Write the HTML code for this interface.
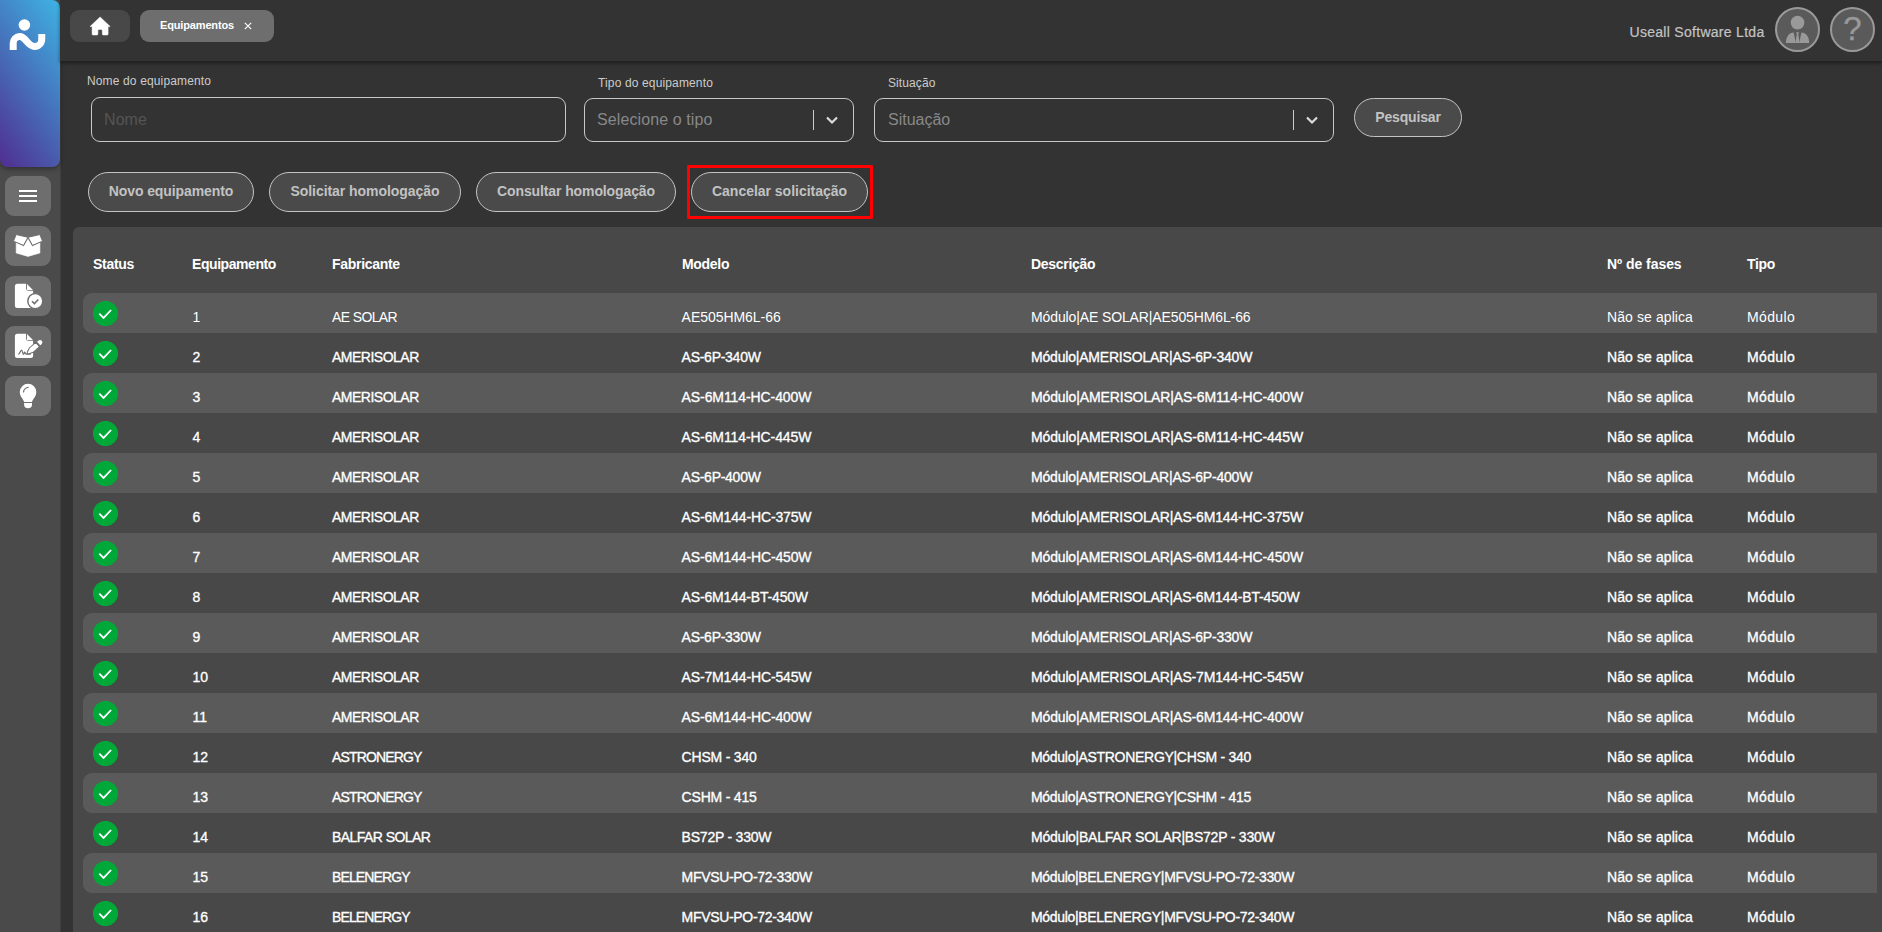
<!DOCTYPE html>
<html lang="pt-BR">
<head>
<meta charset="utf-8">
<title>Equipamentos</title>
<style>
*{box-sizing:border-box;margin:0;padding:0}
html,body{width:1882px;height:932px;overflow:hidden;background:#333;font-family:"Liberation Sans",sans-serif;color:#fff}
body{position:relative}
#side{position:absolute;left:0;top:0;width:60px;height:932px;background:#4a4a4a;box-shadow:1px 0 0 #3f3f3f}
#logo{position:absolute;left:0;top:0;width:60px;height:167px;border-radius:0 8px 8px 8px;background:linear-gradient(235deg,#3eb4e4 0%,#4670ba 50%,#502d91 100%);box-shadow:0 2px 5px rgba(0,0,0,.35)}
.sb{position:absolute;left:5px;width:46px;height:40px;border-radius:9px;background:#6e6e6e}
.sb svg{position:absolute;left:0;top:0}
#top{position:absolute;left:60px;top:0;width:1822px;height:61px;background:#333;box-shadow:0 2px 4px rgba(0,0,0,.45)}
.tab{position:absolute;top:10px;height:32px;border-radius:9px}
#home{left:10px;width:60px;background:#484848}
#tabeq{left:80px;width:134px;background:#6e6e6e}
#tabeq .t{position:absolute;left:20px;top:0;line-height:30px;font-size:11px;font-weight:700;letter-spacing:-0.15px;color:#fff;white-space:pre}
#tabeq .x{position:absolute;left:104px;top:0}
#company{position:absolute;left:1569.5px;top:0;line-height:64px;font-size:14px;letter-spacing:.29px;color:#c4c4c4;-webkit-text-stroke:.2px #c4c4c4;white-space:pre}
.circ{position:absolute;top:7px;width:45px;height:45px;border-radius:50%;background:#5a5a5a;border:2px solid #999}
.circ svg{position:absolute;left:-2px;top:-2px}
.lbl{position:absolute;font-size:12px;line-height:14px;color:#ccc;white-space:pre;letter-spacing:.14px}
.inp{position:absolute;border:1px solid #c8c8c8;border-radius:9px;font-size:16px;white-space:pre}
.inp .ph{position:absolute;left:12px;top:0;line-height:42px}
.inp .sep{position:absolute;top:11px;width:1px;height:20px;background:#ccc}
.inp svg{position:absolute}
.btn{position:absolute;height:40px;border:1px solid #c4c4c4;border-radius:20px;background:#4a4a4a;color:#c2c2c2;font-size:14px;font-weight:700;text-align:center;line-height:36px;white-space:pre}
#hl{position:absolute;left:687px;top:165px;width:186px;height:54px;border:3px solid #f00;border-radius:1px}
#panel{position:absolute;left:73px;top:227px;width:1820px;height:720px;background:#484848;border-radius:6px 0 0 0}
.th{position:absolute;top:27px;line-height:20px;font-size:14px;font-weight:700;white-space:pre;letter-spacing:-.3px}
.row{position:absolute;left:10px;width:1794px;height:40px;border-radius:9px 0 0 9px}
.row.odd{background:#5a5a5a}
.ok{position:absolute;left:10px;top:8px;width:25px;height:25px}
.c{position:absolute;top:14px;line-height:20px;font-size:14px;white-space:pre}
.c1{left:109.5px}.c2{left:249px;letter-spacing:-.5px}.c3{left:598.6px;letter-spacing:-.1px}.c4{left:948px;letter-spacing:-.12px}.c5{left:1524px;letter-spacing:.09px}.c6{left:1664px;letter-spacing:.35px}
.row:not(.first) .c{-webkit-text-stroke:.33px #fff}

</style>
</head>
<body>
<div id="side">
<div id="logo"><svg width="60" height="60" viewBox="0 0 60 60"><circle cx="24.4" cy="25" r="5.8" fill="#fff"/><path d="M13.2 50.1V43.2A6.7 6.7 0 0 1 19.9 36.5C25.5 36.5 28 46.5 34.4 46.5A7.35 7.35 0 0 0 41.75 39.15V33.9" fill="none" stroke="#fff" stroke-width="7"/></svg></div>
<div class="sb" style="top:176px"><svg width="46" height="40" viewBox="0 0 46 40"><path d="M14 14h18v2H14zM14 19h18v2H14zM14 24h18v2H14z" fill="#fff"/></svg></div>
<div class="sb" style="top:226px"><svg width="46" height="40" viewBox="0 0 46 40"><path d="M11.200 16.500L18.800 20.600 23 13 27.200 20.600 34.900 16.500V27L23 30.400 11.200 27z" fill="#fff" stroke="#fff" stroke-width=".6" stroke-linejoin="round"/><g fill="#fff" stroke="#6e6e6e" stroke-width="1" stroke-linejoin="round"><path d="M11.200 8.500L23 11.300 18.500 19.400 8.400 15.200z"/><path d="M34.800 8.500L23 11.300 27.500 19.400 37.600 15.200z"/></g></svg></div>
<div class="sb" style="top:276px"><svg width="46" height="40" viewBox="0 0 46 40"><path d="M12.400 7.700H21.100V12.500A2.200 2.200 0 0 0 23.300 14.700H28.100V32H12.400A2.500 2.500 0 0 1 9.900 29.500V10.200A2.500 2.500 0 0 1 12.400 7.700z" fill="#fff"/><path d="M22 8.100L27.900 13.900H22z" fill="#fff"/><circle cx="30.300" cy="25.100" r="7.500" fill="#fff" stroke="#6e6e6e" stroke-width="1.400"/><path d="M27 25.300l2.400 2.300 3.900-4.200" fill="none" stroke="#6e6e6e" stroke-width="1.500"/></svg></div>
<div class="sb" style="top:326px"><svg width="46" height="40" viewBox="0 0 46 40"><path d="M12.400 7.700H21.100V12.500A2.200 2.200 0 0 0 23.300 14.700H28.100V29.500A2.500 2.500 0 0 1 25.600 32H12.400A2.500 2.500 0 0 1 9.900 29.500V10.200A2.500 2.500 0 0 1 12.400 7.700z" fill="#fff"/><path d="M22 8.100L27.900 13.900H22z" fill="#fff"/><path d="M13.300 28.300C15 28.300 15.500 24.200 16.500 24.200S17.600 28.300 18.500 28.300 19 26.200 19.600 26.200 20.300 28.100 21.600 28.100H25.800" fill="none" stroke="#6e6e6e" stroke-width="1.200"/><g transform="translate(22.700 27.300) rotate(-41.500)" fill="#fff" stroke="#6e6e6e" stroke-width="1"><path d="M-.6 0L.6 -1.200 4.800-2.900H13.200V2.900H4.800L.6 1.200z"/><path d="M14.200-2.900H16.400A2.900 2.900 0 0 1 16.400 2.900H14.200z"/></g></svg></div>
<div class="sb" style="top:376px"><svg width="46" height="40" viewBox="0 0 46 40"><path d="M19.100 26C18.500 23.300 14.800 21 14.800 16.100A8.250 8.250 0 0 1 31.300 16.100C31.300 21 27.600 23.300 27 26z" fill="#fff"/><path d="M19.100 27.100H27V28.400A3.950 3.800 0 0 1 19.100 28.400z" fill="#fff"/><path d="M18.500 16.500A5.200 5.200 0 0 1 23.600 11.400" fill="none" stroke="#6e6e6e" stroke-width="1.200"/></svg></div>
</div>
<div id="top">
<div class="tab" id="home"><svg width="60" height="32" viewBox="0 0 60 32" style="position:absolute;left:0;top:0"><path d="M30.100 7L20 16.600h2.100v7.400a1 1 0 0 0 1 1h3.800a1 1 0 0 0 1-1v-3.500a1 1 0 0 1 1-1h2.400a1 1 0 0 1 1 1v3.500a1 1 0 0 0 1 1h3.800a1 1 0 0 0 1-1v-7.400h2.100z" fill="#fff" stroke="#fff" stroke-width=".5" stroke-linejoin="round"/></svg></div>
<div class="tab" id="tabeq"><span class="t">Equipamentos</span><svg class="x" width="10" height="32" viewBox="0 0 10 32"><path d="M.800 12.800l6.400 6.400M7.200 12.800l-6.400 6.400" stroke="#fff" stroke-width="1.150" fill="none"/></svg></div>
<div id="company">Useall Software Ltda</div>
<div class="circ" style="left:1715px"><svg width="45" height="45" viewBox="0 0 45 45" fill="#999"><circle cx="22.550" cy="15.600" r="6.850"/><path d="M10.900 36C10.900 30 14 25.600 18.700 25.600L20.900 36z"/><path d="M34.200 36C34.200 30 31.100 25.600 26.400 25.600L24.200 36z"/><path d="M21.100 25.300H24L23.300 27.500 24.700 36H20.400L21.800 27.500z"/></svg></div>
<div class="circ" style="left:1770px"><span style="position:absolute;left:-2px;top:-2px;width:45px;text-align:center;line-height:44px;font-size:33px;color:#999;-webkit-text-stroke:.35px #999">?</span></div>
</div>
<div class="lbl" style="left:87px;top:74px">Nome do equipamento</div>
<div class="inp" style="left:91px;top:97px;width:475px;height:45px"><span class="ph" style="color:#555;letter-spacing:.08px;line-height:44px">Nome</span></div>
<div class="lbl" style="left:598px;top:76px">Tipo do equipamento</div>
<div class="inp" style="left:584px;top:98px;width:270px;height:44px"><span class="ph" style="color:#888;letter-spacing:.1px">Selecione o tipo</span><span class="sep" style="left:228px"></span><svg style="left:240px;top:14.300px" width="14" height="14" viewBox="0 0 14 14"><path d="M2 4.500l5 5 5-5" fill="none" stroke="#ddd" stroke-width="2.200"/></svg></div>
<div class="lbl" style="left:888px;top:76px;letter-spacing:.1px">Situação</div>
<div class="inp" style="left:874px;top:98px;width:460px;height:44px"><span class="ph" style="color:#888;left:13px">Situação</span><span class="sep" style="left:418px"></span><svg style="left:430px;top:14.300px" width="14" height="14" viewBox="0 0 14 14"><path d="M2 4.500l5 5 5-5" fill="none" stroke="#ddd" stroke-width="2.200"/></svg></div>
<div class="btn" style="left:1354px;top:98px;width:108px;height:39px;letter-spacing:-.18px">Pesquisar</div>
<div class="btn" style="left:88px;top:172px;width:166px;letter-spacing:-.09px">Novo equipamento</div>
<div class="btn" style="left:269px;top:172px;width:192px;letter-spacing:-.05px">Solicitar homologação</div>
<div class="btn" style="left:476px;top:172px;width:200px;letter-spacing:-.11px">Consultar homologação</div>
<div class="btn" style="left:691px;top:172px;width:177px;letter-spacing:-.02px">Cancelar solicitação</div>
<div id="hl"></div>
<div id="panel">
<div class="th" style="left:20px">Status</div>
<div class="th" style="left:119px;letter-spacing:-.43px">Equipamento</div>
<div class="th" style="left:259px">Fabricante</div>
<div class="th" style="left:609px">Modelo</div>
<div class="th" style="left:958px">Descrição</div>
<div class="th" style="left:1534px;letter-spacing:-.05px">Nº de fases</div>
<div class="th" style="left:1674px">Tipo</div>
<div class="row odd first" style="top:66px"><span class="ok"><svg width="25" height="25" viewBox="0 0 25 25"><circle cx="12.5" cy="12.5" r="12.6" fill="#00a838"/><path d="M6.300 12.600l4.200 4.300L18.100 9" fill="none" stroke="#fff" stroke-width="1.800"/></svg></span><span class="c c1">1</span><span class="c c2" style="letter-spacing:-0.628px">AE SOLAR</span><span class="c c3" style="letter-spacing:-0.043px">AE505HM6L-66</span><span class="c c4" style="letter-spacing:-0.119px">Módulo|AE SOLAR|AE505HM6L-66</span><span class="c c5">Não se aplica</span><span class="c c6">Módulo</span></div>
<div class="row" style="top:106px"><span class="ok"><svg width="25" height="25" viewBox="0 0 25 25"><circle cx="12.5" cy="12.5" r="12.6" fill="#00a838"/><path d="M6.300 12.600l4.200 4.300L18.100 9" fill="none" stroke="#fff" stroke-width="1.800"/></svg></span><span class="c c1">2</span><span class="c c2" style="letter-spacing:-0.5px">AMERISOLAR</span><span class="c c3" style="letter-spacing:-0.27px">AS-6P-340W</span><span class="c c4" style="letter-spacing:-0.196px">Módulo|AMERISOLAR|AS-6P-340W</span><span class="c c5">Não se aplica</span><span class="c c6">Módulo</span></div>
<div class="row odd" style="top:146px"><span class="ok"><svg width="25" height="25" viewBox="0 0 25 25"><circle cx="12.5" cy="12.5" r="12.6" fill="#00a838"/><path d="M6.300 12.600l4.200 4.300L18.100 9" fill="none" stroke="#fff" stroke-width="1.800"/></svg></span><span class="c c1">3</span><span class="c c2" style="letter-spacing:-0.5px">AMERISOLAR</span><span class="c c3" style="letter-spacing:-0.089px">AS-6M114-HC-400W</span><span class="c c4" style="letter-spacing:-0.124px">Módulo|AMERISOLAR|AS-6M114-HC-400W</span><span class="c c5">Não se aplica</span><span class="c c6">Módulo</span></div>
<div class="row" style="top:186px"><span class="ok"><svg width="25" height="25" viewBox="0 0 25 25"><circle cx="12.5" cy="12.5" r="12.6" fill="#00a838"/><path d="M6.300 12.600l4.200 4.300L18.100 9" fill="none" stroke="#fff" stroke-width="1.800"/></svg></span><span class="c c1">4</span><span class="c c2" style="letter-spacing:-0.5px">AMERISOLAR</span><span class="c c3" style="letter-spacing:-0.089px">AS-6M114-HC-445W</span><span class="c c4" style="letter-spacing:-0.124px">Módulo|AMERISOLAR|AS-6M114-HC-445W</span><span class="c c5">Não se aplica</span><span class="c c6">Módulo</span></div>
<div class="row odd" style="top:226px"><span class="ok"><svg width="25" height="25" viewBox="0 0 25 25"><circle cx="12.5" cy="12.5" r="12.6" fill="#00a838"/><path d="M6.300 12.600l4.200 4.300L18.100 9" fill="none" stroke="#fff" stroke-width="1.800"/></svg></span><span class="c c1">5</span><span class="c c2" style="letter-spacing:-0.5px">AMERISOLAR</span><span class="c c3" style="letter-spacing:-0.27px">AS-6P-400W</span><span class="c c4" style="letter-spacing:-0.196px">Módulo|AMERISOLAR|AS-6P-400W</span><span class="c c5">Não se aplica</span><span class="c c6">Módulo</span></div>
<div class="row" style="top:266px"><span class="ok"><svg width="25" height="25" viewBox="0 0 25 25"><circle cx="12.5" cy="12.5" r="12.6" fill="#00a838"/><path d="M6.300 12.600l4.200 4.300L18.100 9" fill="none" stroke="#fff" stroke-width="1.800"/></svg></span><span class="c c1">6</span><span class="c c2" style="letter-spacing:-0.5px">AMERISOLAR</span><span class="c c3" style="letter-spacing:-0.154px">AS-6M144-HC-375W</span><span class="c c4" style="letter-spacing:-0.155px">Módulo|AMERISOLAR|AS-6M144-HC-375W</span><span class="c c5">Não se aplica</span><span class="c c6">Módulo</span></div>
<div class="row odd" style="top:306px"><span class="ok"><svg width="25" height="25" viewBox="0 0 25 25"><circle cx="12.5" cy="12.5" r="12.6" fill="#00a838"/><path d="M6.300 12.600l4.200 4.300L18.100 9" fill="none" stroke="#fff" stroke-width="1.800"/></svg></span><span class="c c1">7</span><span class="c c2" style="letter-spacing:-0.5px">AMERISOLAR</span><span class="c c3" style="letter-spacing:-0.154px">AS-6M144-HC-450W</span><span class="c c4" style="letter-spacing:-0.155px">Módulo|AMERISOLAR|AS-6M144-HC-450W</span><span class="c c5">Não se aplica</span><span class="c c6">Módulo</span></div>
<div class="row" style="top:346px"><span class="ok"><svg width="25" height="25" viewBox="0 0 25 25"><circle cx="12.5" cy="12.5" r="12.6" fill="#00a838"/><path d="M6.300 12.600l4.200 4.300L18.100 9" fill="none" stroke="#fff" stroke-width="1.800"/></svg></span><span class="c c1">8</span><span class="c c2" style="letter-spacing:-0.5px">AMERISOLAR</span><span class="c c3" style="letter-spacing:-0.179px">AS-6M144-BT-450W</span><span class="c c4" style="letter-spacing:-0.166px">Módulo|AMERISOLAR|AS-6M144-BT-450W</span><span class="c c5">Não se aplica</span><span class="c c6">Módulo</span></div>
<div class="row odd" style="top:386px"><span class="ok"><svg width="25" height="25" viewBox="0 0 25 25"><circle cx="12.5" cy="12.5" r="12.6" fill="#00a838"/><path d="M6.300 12.600l4.200 4.300L18.100 9" fill="none" stroke="#fff" stroke-width="1.800"/></svg></span><span class="c c1">9</span><span class="c c2" style="letter-spacing:-0.5px">AMERISOLAR</span><span class="c c3" style="letter-spacing:-0.27px">AS-6P-330W</span><span class="c c4" style="letter-spacing:-0.196px">Módulo|AMERISOLAR|AS-6P-330W</span><span class="c c5">Não se aplica</span><span class="c c6">Módulo</span></div>
<div class="row" style="top:426px"><span class="ok"><svg width="25" height="25" viewBox="0 0 25 25"><circle cx="12.5" cy="12.5" r="12.6" fill="#00a838"/><path d="M6.300 12.600l4.200 4.300L18.100 9" fill="none" stroke="#fff" stroke-width="1.800"/></svg></span><span class="c c1">10</span><span class="c c2" style="letter-spacing:-0.5px">AMERISOLAR</span><span class="c c3" style="letter-spacing:-0.154px">AS-7M144-HC-545W</span><span class="c c4" style="letter-spacing:-0.155px">Módulo|AMERISOLAR|AS-7M144-HC-545W</span><span class="c c5">Não se aplica</span><span class="c c6">Módulo</span></div>
<div class="row odd" style="top:466px"><span class="ok"><svg width="25" height="25" viewBox="0 0 25 25"><circle cx="12.5" cy="12.5" r="12.6" fill="#00a838"/><path d="M6.300 12.600l4.200 4.300L18.100 9" fill="none" stroke="#fff" stroke-width="1.800"/></svg></span><span class="c c1">11</span><span class="c c2" style="letter-spacing:-0.5px">AMERISOLAR</span><span class="c c3" style="letter-spacing:-0.154px">AS-6M144-HC-400W</span><span class="c c4" style="letter-spacing:-0.155px">Módulo|AMERISOLAR|AS-6M144-HC-400W</span><span class="c c5">Não se aplica</span><span class="c c6">Módulo</span></div>
<div class="row" style="top:506px"><span class="ok"><svg width="25" height="25" viewBox="0 0 25 25"><circle cx="12.5" cy="12.5" r="12.6" fill="#00a838"/><path d="M6.300 12.600l4.200 4.300L18.100 9" fill="none" stroke="#fff" stroke-width="1.800"/></svg></span><span class="c c1">12</span><span class="c c2" style="letter-spacing:-0.851px">ASTRONERGY</span><span class="c c3" style="letter-spacing:-0.202px">CHSM - 340</span><span class="c c4" style="letter-spacing:-0.297px">Módulo|ASTRONERGY|CHSM - 340</span><span class="c c5">Não se aplica</span><span class="c c6">Módulo</span></div>
<div class="row odd" style="top:546px"><span class="ok"><svg width="25" height="25" viewBox="0 0 25 25"><circle cx="12.5" cy="12.5" r="12.6" fill="#00a838"/><path d="M6.300 12.600l4.200 4.300L18.100 9" fill="none" stroke="#fff" stroke-width="1.800"/></svg></span><span class="c c1">13</span><span class="c c2" style="letter-spacing:-0.851px">ASTRONERGY</span><span class="c c3" style="letter-spacing:-0.202px">CSHM - 415</span><span class="c c4" style="letter-spacing:-0.297px">Módulo|ASTRONERGY|CSHM - 415</span><span class="c c5">Não se aplica</span><span class="c c6">Módulo</span></div>
<div class="row" style="top:586px"><span class="ok"><svg width="25" height="25" viewBox="0 0 25 25"><circle cx="12.5" cy="12.5" r="12.6" fill="#00a838"/><path d="M6.300 12.600l4.200 4.300L18.100 9" fill="none" stroke="#fff" stroke-width="1.800"/></svg></span><span class="c c1">14</span><span class="c c2" style="letter-spacing:-0.553px">BALFAR SOLAR</span><span class="c c3" style="letter-spacing:-0.22px">BS72P - 330W</span><span class="c c4" style="letter-spacing:-0.221px">Módulo|BALFAR SOLAR|BS72P - 330W</span><span class="c c5">Não se aplica</span><span class="c c6">Módulo</span></div>
<div class="row odd" style="top:626px"><span class="ok"><svg width="25" height="25" viewBox="0 0 25 25"><circle cx="12.5" cy="12.5" r="12.6" fill="#00a838"/><path d="M6.300 12.600l4.200 4.300L18.100 9" fill="none" stroke="#fff" stroke-width="1.800"/></svg></span><span class="c c1">15</span><span class="c c2" style="letter-spacing:-0.887px">BELENERGY</span><span class="c c3" style="letter-spacing:-0.322px">MFVSU-PO-72-330W</span><span class="c c4" style="letter-spacing:-0.331px">Módulo|BELENERGY|MFVSU-PO-72-330W</span><span class="c c5">Não se aplica</span><span class="c c6">Módulo</span></div>
<div class="row" style="top:666px"><span class="ok"><svg width="25" height="25" viewBox="0 0 25 25"><circle cx="12.5" cy="12.5" r="12.6" fill="#00a838"/><path d="M6.300 12.600l4.200 4.300L18.100 9" fill="none" stroke="#fff" stroke-width="1.800"/></svg></span><span class="c c1">16</span><span class="c c2" style="letter-spacing:-0.887px">BELENERGY</span><span class="c c3" style="letter-spacing:-0.322px">MFVSU-PO-72-340W</span><span class="c c4" style="letter-spacing:-0.331px">Módulo|BELENERGY|MFVSU-PO-72-340W</span><span class="c c5">Não se aplica</span><span class="c c6">Módulo</span></div>
</div>
</body>
</html>
